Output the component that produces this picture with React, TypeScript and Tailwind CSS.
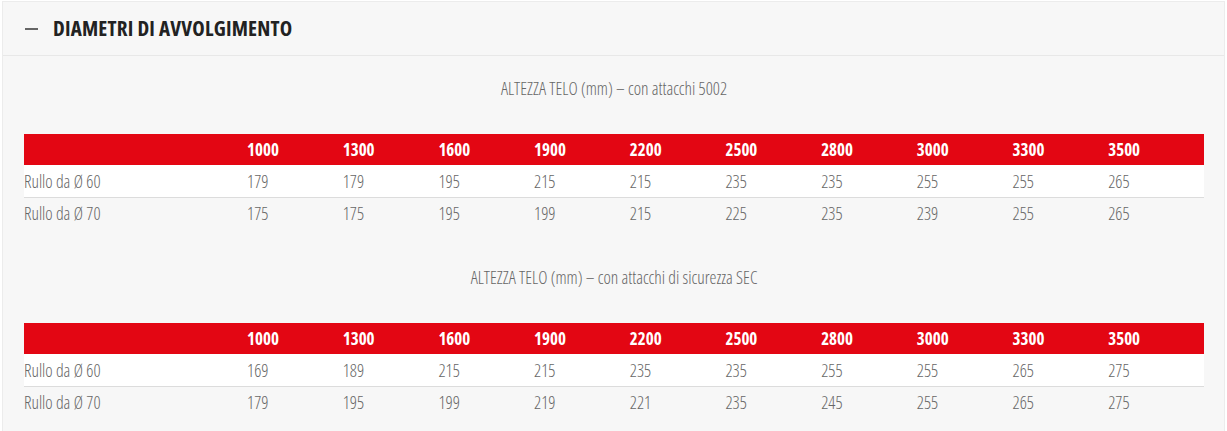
const cols = ['1000', '1300', '1600', '1900', '2200', '2500', '2800', '3000', '3300', '3500'];

const tables = [
  {
    title: 'ALTEZZA TELO (mm) – con attacchi 5002',
    rows: [
      { label: 'Rullo da Ø 60', values: ['179', '179', '195', '215', '215', '235', '235', '255', '255', '265'] },
      { label: 'Rullo da Ø 70', values: ['175', '175', '195', '199', '215', '225', '235', '239', '255', '265'] },
    ],
  },
  {
    title: 'ALTEZZA TELO (mm) – con attacchi di sicurezza SEC',
    rows: [
      { label: 'Rullo da Ø 60', values: ['169', '189', '215', '215', '235', '235', '255', '255', '265', '275'] },
      { label: 'Rullo da Ø 70', values: ['179', '195', '199', '219', '221', '235', '245', '255', '265', '275'] },
    ],
  },
];

function SizeTable({ title, rows }: (typeof tables)[number]) {
  return (
    <div>
      {/* titolo tabella */}
      <p className="text-center text-[17.5px] leading-[20px] text-[#666] font-light h-[20px]">{title}</p>
      <table className="mt-[36px] w-full border-collapse table-fixed">
        <colgroup>
          <col className="w-[223px]" />
          {cols.map((c) => (
            <col key={c} />
          ))}
        </colgroup>
        <thead>
          <tr className="bg-[#e30613] h-[31px]">
            <th />
            {cols.map((c) => (
              <th key={c} className="text-left text-white font-bold text-[17px] leading-[31px] p-0">
                {c}
              </th>
            ))}
          </tr>
        </thead>
        <tbody>
          {rows.map((r, i) => (
            <tr key={r.label} className={i === 0 ? 'bg-white border-b border-[#dcdcdc] h-[32px]' : 'h-[32px]'}>
              <td className="text-[17.5px] text-[#666] font-light p-0">{r.label}</td>
              {r.values.map((v, j) => (
                <td key={j} className="text-[17.5px] text-[#666] font-light p-0">
                  {v}
                </td>
              ))}
            </tr>
          ))}
        </tbody>
      </table>
    </div>
  );
}

export default function App() {
  return (
    <div
      className="w-[1227px] h-[431px] bg-white pt-[1px] px-[2px] overflow-hidden [font-stretch:75%]"
      style={{ fontFamily: "'Open Sans', 'Liberation Sans', sans-serif" }}
    >
      <div className="bg-[#f7f7f7] border border-[#ececec] h-[440px]">
        {/* intestazione accordion */}
        <div className="h-[54px] flex items-center gap-[15px] pl-[22px] border-b border-[#e8e8e8]">
          <span className="w-[13px] h-[2px] bg-[#666] block" />
          <h2 className="text-[21px] font-bold text-[#222] tracking-[0.2px]">DIAMETRI DI AVVOLGIMENTO</h2>
        </div>
        <div className="pl-[21px] pr-[20px] pt-[22px] flex flex-col gap-[38px]">
          {tables.map((t) => (
            <SizeTable key={t.title} {...t} />
          ))}
        </div>
      </div>
    </div>
  );
}
